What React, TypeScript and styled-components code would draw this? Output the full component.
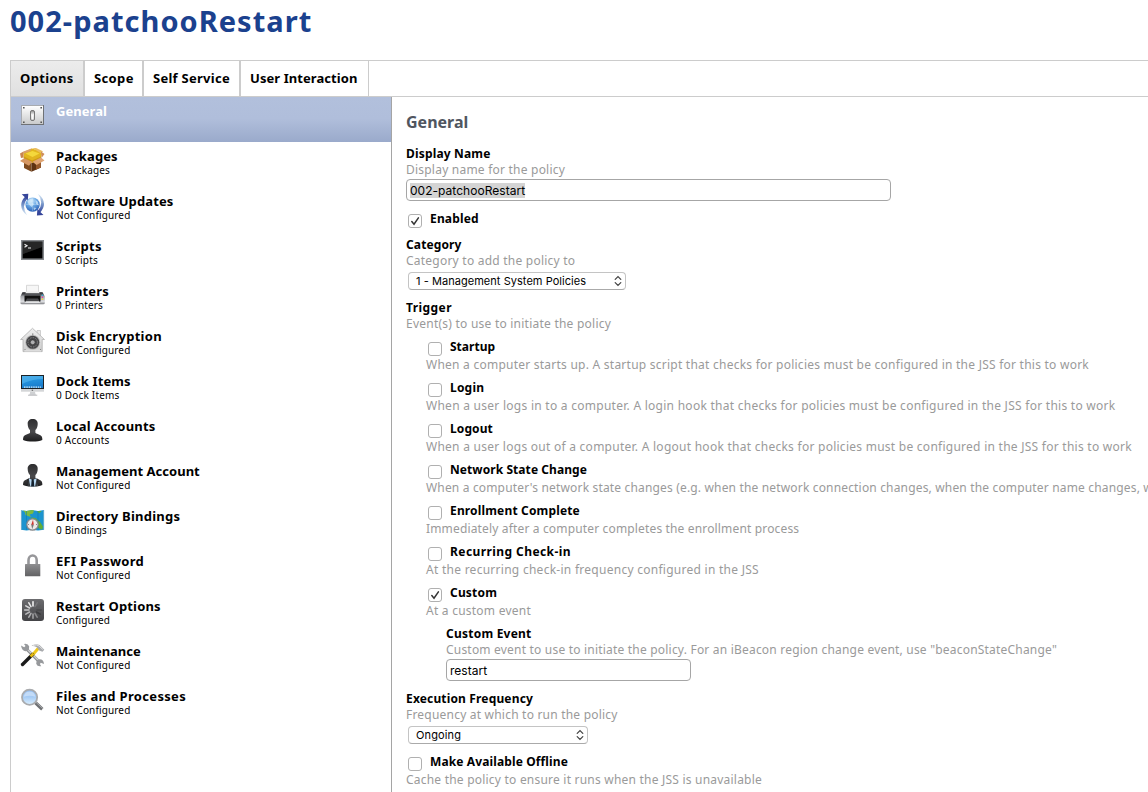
import React from "react";
import styled, { createGlobalStyle, css } from "styled-components";

const GlobalStyle = createGlobalStyle`
  *, *::before, *::after { box-sizing: border-box; }
  html, body { margin: 0; padding: 0; background: #fff; overflow: hidden; }
  body { font-family: "Noto Sans", "Open Sans", sans-serif; color: #000; }
`;

const Page = styled.div`
  display: flex;
  flex-direction: column;
  height: 792px;
  padding: 1px 0 0 10px;
  overflow: hidden;
  white-space: nowrap;
`;

const PageTitle = styled.h1`
  margin: 0 0 19px;
  font-size: 29px;
  line-height: 40px;
  font-weight: 700;
  letter-spacing: 1.03px;
  color: #1b418e;
`;

const TabBar = styled.nav`
  display: flex;
  flex: none;
  height: 37px;
  border-top: 1px solid #ccc;
  border-bottom: 1px solid #ccc;
`;

const Tab = styled.div<{ $width: number; $ls: number; $active?: boolean }>`
  flex: none;
  width: ${(p) => p.$width}px;
  padding: 8px 0 0 9px;
  border-left: 1px solid #ccc;
  border-right: 1px solid #ccc;
  font-size: 13px;
  line-height: 18px;
  font-weight: 700;
  letter-spacing: ${(p) => p.$ls}px;
  background: ${(p) => (p.$active ? "linear-gradient(#ececec, #e0e0e0)" : "#fff")};
`;

const Body = styled.div`
  display: flex;
  flex: 1;
  min-height: 0;
`;

const Sidebar = styled.aside`
  flex: none;
  width: 382px;
  border-left: 1px solid #ccc;
  border-right: 1px solid #a5a5a5;
`;

const SideItem = styled.div<{ $active?: boolean }>`
  display: flex;
  height: 45px;
  padding: 5px 0 0 9px;
  gap: 10px;
  ${(p) =>
    p.$active &&
    css`
      color: #fff;
      background: linear-gradient(#b2c0dc 0%, #b0bedb 48%, #9aaacb 100%);
    `}
`;

const SideText = styled.div`
  display: flex;
  flex-direction: column;
  padding-top: 1px;
`;

const SideTitle = styled.div<{ $ls: number }>`
  font-size: 13px;
  line-height: 16px;
  font-weight: 700;
  letter-spacing: ${(p) => p.$ls}px;
`;

const SideStatus = styled.div<{ $ls: number }>`
  font-size: 10px;
  line-height: 12px;
  letter-spacing: ${(p) => p.$ls}px;
`;

const IconSvg = styled.svg`
  display: block;
  flex: none;
  width: 26px;
  height: 26px;
`;

const Panel = styled.main`
  flex: 1;
  min-width: 0;
  padding: 14px 0 0 14px;
  overflow: hidden;
`;

const PanelHeading = styled.h2`
  margin: 0 0 13px;
  font-size: 16px;
  line-height: 22px;
  font-weight: 700;
  color: #50565f;
`;

const Field = styled.section<{ $gap: number; $indent?: number }>`
  margin: 0 0 ${(p) => p.$gap}px ${(p) => p.$indent || 0}px;
`;

const Label = styled.div<{ $ls: number }>`
  font-size: 12px;
  line-height: 16px;
  font-weight: 700;
  letter-spacing: ${(p) => p.$ls}px;
`;

const Help = styled.div<{ $ls: number }>`
  font-size: 12px;
  line-height: 16px;
  letter-spacing: ${(p) => p.$ls}px;
  color: #9a9a9a;
`;

const TextField = styled.div<{ $width: number }>`
  display: flex;
  align-items: center;
  width: ${(p) => p.$width}px;
  height: 22px;
  margin-top: 1px;
  padding-left: 3px;
  border: 1px solid #a6a6a6;
  border-radius: 4px;
  font: 12px/15px Inter, sans-serif;
  letter-spacing: 0.03px;
`;

const Selection = styled.span`
  height: 15px;
  background: #d4d4d4;
`;

const SelectBox = styled.div<{ $width: number; $ls: number }>`
  display: flex;
  align-items: center;
  justify-content: space-between;
  width: ${(p) => p.$width}px;
  height: 18px;
  margin: 3px 0 0 2px;
  padding: 0 3px 0 7px;
  border: 1px solid #c4c4c4;
  border-bottom-color: #aaa;
  border-radius: 4px;
  font: 11px/16px Inter, sans-serif;
  letter-spacing: ${(p) => p.$ls}px;
`;

const Arrows = styled.svg`
  width: 8px;
  height: 12px;
`;

const CheckRow = styled.div`
  display: flex;
  gap: 8px;
  height: 18px;
  padding-left: 2px;
`;

const CheckBox = styled.span`
  display: block;
  width: 14px;
  height: 14px;
  margin-top: 3px;
  border: 1px solid #b0b0b0;
  border-radius: 3px;
  background: #fff;
`;

const Tick = styled.svg`
  display: block;
  width: 12px;
  height: 12px;
`;

function Check({ text, ls, checked }: { text: string; ls: number; checked?: boolean }) {
  return (
    <CheckRow>
      <CheckBox>
        {checked && (
          <Tick viewBox="0 0 12 12">
            <path d="M2.8 6.6 5 9.2 9.4 2.8" fill="none" stroke="#333" strokeWidth="1.5" strokeLinecap="round" />
          </Tick>
        )}
      </CheckBox>
      <Label $ls={ls}>{text}</Label>
    </CheckRow>
  );
}

function Select({ text, width, ls }: { text: string; width: number; ls: number }) {
  return (
    <SelectBox $width={width} $ls={ls}>
      {text}
      <Arrows viewBox="0 0 8 12">
        <path d="M1.2 4.4 4 1.6 6.8 4.4M1.2 7.6 4 10.4 6.8 7.6" fill="none" stroke="#444" strokeWidth="1.25" strokeLinecap="round" />
      </Arrows>
    </SelectBox>
  );
}

const SwitchIcon = () => (
  <IconSvg viewBox="0 0 26 26">
    <defs>
      <linearGradient id="plate" x2="0" y2="1"><stop stopColor="#fff" /><stop offset="1" stopColor="#c9cacb" /></linearGradient>
      <linearGradient id="toggle" x2="0" y2="1"><stop stopColor="#888" /><stop offset="0.4" stopColor="#eee" /><stop offset="1" stopColor="#aaa" /></linearGradient>
    </defs>
    <rect x="1" y="3" width="23" height="20" fill="#6f7276" />
    <rect x="1" y="3" width="22" height="19" fill="#a8abb0" />
    <rect x="2" y="4" width="21" height="18" fill="url(#plate)" />
    <rect x="10.5" y="8.5" width="4" height="10" rx="1.5" fill="url(#toggle)" stroke="#777" />
    <path d="M11.5 13h2v4.5h-2z" fill="#fafafa" />
    <path d="M3 5h1.6v1.4H3zM20.4 5H22v1.4h-1.6zM3 19.5h1.6V21H3zM20.4 19.5H22V21h-1.6z" fill="#555" />
  </IconSvg>
);

const PackageIcon = () => (
  <IconSvg viewBox="0 0 26 26">
    <path d="M4 12 11.5 16v8.7L4 21z" fill="#7d4a1f" />
    <path d="M11.5 16 21 12v8.5l-9.5 4.2z" fill="#5e3212" />
    <path d="M16 15l5-2v7.5l-5 2.2z" fill="#96592b" />
    <path d="M3.5 5 12 1.500 22 4.500 21 11l-9 3.500L3.500 11z" fill="#e2b51f" />
    <path d="M5.500 6.500 12.500 4l7 2.500-7 3.500z" fill="#f4d83c" />
    <path d="M4 9.500l8 4 9-4v2.500l-9 4-8-4z" fill="#cf9a16" />
    <path d="M3.500 4.500 12 1.200l-2 3-6.500 2.600z" fill="#d9a06c" />
    <path d="M12.500 1.200 16 1l7 3.200-2 2z" fill="#e9bc62" />
    <path d="M0 6.500 3.500 4.500v6L1 11z" fill="#c98552" />
    <path d="M0 14 4 11.200l8 3.500-3 4z" fill="#d69763" />
    <path d="M12.500 14.700 21 10.500l3.500 3-8 4.500z" fill="#dfa574" />
    <path d="M21 4.500l3.500 2.500-3 4z" fill="#cf8d58" />
  </IconSvg>
);

const UpdatesIcon = () => (
  <IconSvg viewBox="0 0 26 26">
    <defs>
      <radialGradient id="globe" cx="0.42" cy="0.25" r="0.8"><stop stopColor="#d8edfc" /><stop offset="0.45" stopColor="#6aa8e4" /><stop offset="1" stopColor="#2257b0" /></radialGradient>
      <linearGradient id="arcL" x2="0" y2="1"><stop stopColor="#33459b" /><stop offset="0.5" stopColor="#7f9fce" /><stop offset="1" stopColor="#e3eff9" /></linearGradient>
      <linearGradient id="arcR" x2="0" y2="1"><stop stopColor="#e3eff9" /><stop offset="0.5" stopColor="#7f9fce" /><stop offset="1" stopColor="#33459b" /></linearGradient>
    </defs>
    <circle cx="12.600" cy="12.600" r="7.200" fill="url(#globe)" />
    <path d="M7.500 9l3.500-2.500 2 1-1.500 2.500L14 12l-2.500 3-3-3zM15.500 8l2.500 2 .5 3.500-2.500-1.500zM13.500 15.500l3 .5-2.500 2.500z" fill="#d4ebfa" opacity="0.7" />
    <path d="M5.500 12.500h14M12.600 5.500v14" fill="none" stroke="#e4f3ff" strokeWidth="0.500" opacity="0.600" />
    <path d="M5.300 4.500Q-1.200 11 2.600 18.500 4 21.300 7.300 23.500 .6 14 7.400 6.500z" fill="url(#arcL)" />
    <path d="M1.700 2.300 8.300 1.700 7.800 8.300 6 6.300z" fill="#35459a" />
    <path d="M19.900 20.700Q26.400 14.200 22.600 6.700 21.200 3.900 17.900 1.700 24.600 11.200 17.800 18.700z" fill="url(#arcR)" />
    <path d="M23.500 22.900 16.900 23.500 17.400 16.900 19.200 18.900z" fill="#35459a" />
  </IconSvg>
);

const ScriptsIcon = () => (
  <IconSvg viewBox="0 0 26 26">
    <rect x="1" y="3" width="23" height="20" fill="#85888c" />
    <rect x="2.500" y="4.500" width="20" height="17" fill="#151515" />
    <path d="M3 17 22 10v11H3z" fill="#000" />
    <path d="M22 5v5L3 17V5z" fill="#262626" />
    <path d="M4.500 7.300 7 8.700 4.500 10.200M8 11h3" fill="none" stroke="#f2f2f2" strokeWidth="1.100" />
  </IconSvg>
);

const PrinterIcon = () => (
  <IconSvg viewBox="0 0 26 26">
    <defs>
      <linearGradient id="prn" x2="0" y2="1"><stop stopColor="#5f5f63" /><stop offset="0.150" stopColor="#36373b" /><stop offset="0.350" stopColor="#a2a4a9" /><stop offset="0.800" stopColor="#dcdde0" /><stop offset="1" stopColor="#77787c" /></linearGradient>
    </defs>
    <path d="M6.500 3.300h12v8h-12z" fill="#f6f6f6" stroke="#c9c9c9" strokeWidth="0.700" />
    <path d="M2.500 10h20l2.300 4.500v6.500q0 1.200-1.500 1.200H2Q.4 22.200.4 21v-6.500z" fill="url(#prn)" />
    <path d="M6 9.500h13l.6 1.800H5.400z" fill="#ececec" />
    <path d="M4.500 13.500h16v6h-16z" fill="#101010" />
    <path d="M7 16.500h11l2 3.500H5z" fill="#4a4b4e" />
    <path d="M6 19.200h13l1 1.600H5z" fill="#f0f0f2" />
    <path d="M21.700 12.500h1.400v1.400h-1.400z" fill="#35b7e5" />
    <path d="M21.700 14.500h1.400v1.400h-1.400z" fill="#e8339c" />
    <path d="M21.700 16.500h1.400v1.400h-1.400z" fill="#f3d51e" />
  </IconSvg>
);

const VaultIcon = () => (
  <IconSvg viewBox="0 0 26 26">
    <defs>
      <linearGradient id="house" x2="0" y2="1"><stop stopColor="#f0f0f0" /><stop offset="1" stopColor="#cbcbcb" /></linearGradient>
    </defs>
    <path d="M17 3.500h3.500V9H17z" fill="#e8e8e8" stroke="#bdbdbd" strokeWidth="0.700" />
    <path d="M12.500 1.300 24.500 12.500H22.200V24.600H3V12.500H.6z" fill="url(#house)" stroke="#b0b0b0" strokeWidth="0.800" />
    <path d="M4.500 22.500h16.500v2H4.500z" fill="#ddd" />
    <circle cx="12.700" cy="15.300" r="7.400" fill="#b0b0b0" />
    <circle cx="12.700" cy="15.300" r="6.500" fill="#454547" />
    <circle cx="12.700" cy="15.300" r="4.700" fill="none" stroke="#858587" strokeWidth="1" strokeDasharray="1.500 1.200" />
    <circle cx="12.700" cy="15.300" r="2.400" fill="#b0b0b2" stroke="#333" strokeWidth="0.600" />
    <path d="M12 6.500h1.400v1.200H12zM4.500 22h1v1h-1zM20 22h1v1h-1z" fill="#888" />
  </IconSvg>
);

const DisplayIcon = () => (
  <IconSvg viewBox="0 0 26 26">
    <defs>
      <linearGradient id="screen" x2="0.300" y2="1"><stop stopColor="#3ba3e4" /><stop offset="0.500" stopColor="#2391dc" /><stop offset="1" stopColor="#1a7dcc" /></linearGradient>
    </defs>
    <rect x="1" y="3" width="23" height="14" fill="#1d2226" />
    <rect x="2" y="4" width="21" height="12" fill="url(#screen)" />
    <path d="M2 4h21v3Q12 7 2 12z" fill="#58b7ee" opacity="0.600" />
    <path d="M4 15.200h17" stroke="#d6edfa" strokeWidth="1.200" strokeDasharray="1.500 0.800" />
    <rect x="1" y="17" width="23" height="2.700" fill="#d4d6d8" />
    <rect x="11.700" y="17.600" width="1.400" height="1.400" fill="#777" />
    <path d="M10.200 19.700h4.800l.5 2.600 1.700 1.200H8l1.700-1.200z" fill="#cfd1d3" />
    <path d="M8 23.200h9.300" stroke="#b6b8ba" strokeWidth="0.800" />
  </IconSvg>
);

const PersonShape = () => (
  <>
    <defs>
      <linearGradient id="person" x2="0" y2="1"><stop stopColor="#2d2d2f" /><stop offset="0.550" stopColor="#4a4a4c" /><stop offset="1" stopColor="#1c1c1d" /></linearGradient>
    </defs>
    <path
      d="M12.700 2C9.300 2 7.400 4 7.700 7.200c.1 2.300.8 4.500 2.300 5.800v2.800c0 1-5.500 1.600-6.500 4-.4 1.200-.5 2.500-.4 3.200C5.500 24.300 9 24.500 12.700 24.500S19.900 24.300 22.300 23c.1-.7 0-2-.4-3.200-1-2.400-6.500-3-6.500-4V13c1.500-1.300 2.200-3.500 2.300-5.800C18 4 16.100 2 12.700 2z"
      fill="url(#person)"
    />
  </>
);

const PersonIcon = () => (
  <IconSvg viewBox="0 0 26 26">
    <PersonShape />
  </IconSvg>
);

const ManagerIcon = () => (
  <IconSvg viewBox="0 0 26 26">
    <PersonShape />
    <path d="M8.700 16.300 12.700 18l4-1.700.8 7.800q-4.800.7-9.600 0z" fill="#b4d6f0" />
    <path d="M11.700 17.300h2l.6 7.100h-3.200z" fill="#14202c" />
    <path d="M8.700 16.300 6.800 17.500 8 24.200h2.300zM16.700 16.300l1.900 1.200-1.200 6.700h-2.300z" fill="#29292b" opacity="0.900" />
  </IconSvg>
);

const MapIcon = () => (
  <IconSvg viewBox="0 0 26 26">
    <path d="M1 3.300 6.500 4 12 3l6 1 6-.9v19.600l-6 .8-6-.8-5.500.8-5.500-.8z" fill="#1b94cf" />
    <path d="M3 3.600 6.500 4 12 3l2 .5-1 3-3.500 1L11 10 8 9 5.500 8 5 5.500z" fill="#7dbb3f" />
    <path d="M11 10.500l4.500.5L20 15l3 4.500-1 3.300-6-3zM17 4h4.500L19 6.500z" fill="#62ad35" />
    <path d="M6.500 4v19M18 4v19" stroke="#0c76ac" strokeWidth="0.500" />
    <path d="M1.400 3.300v19.400M23.700 3.200v19.500" stroke="#87b6cb" strokeWidth="0.800" />
    <circle cx="12.500" cy="17.500" r="5.700" fill="#eceae8" stroke="#85878a" strokeWidth="1.200" />
    <path d="M11.200 18 13 12.700l.8 5z" fill="#d3302a" />
    <path d="M11.200 17.600 12.200 22.300l1.600-4.600z" fill="#777" />
    <path d="M8 17.500h1M16 17.500h1" stroke="#888" />
  </IconSvg>
);

const LockIcon = () => (
  <IconSvg viewBox="0 0 26 26">
    <defs>
      <linearGradient id="lock" x2="0" y2="1"><stop stopColor="#8f8f91" /><stop offset="1" stopColor="#626264" /></linearGradient>
    </defs>
    <path d="M8.500 13V8.200a4.100 4.700 0 0 1 8.200 0V13" fill="none" stroke="#97979a" strokeWidth="2.600" />
    <rect x="5" y="12" width="15.300" height="12.200" rx="0.500" fill="url(#lock)" />
  </IconSvg>
);

const SPOKES = ["#f2f2f2", "#77777a", "#5c5c5e", "#48484a", "#3c3c3e", "#8a8a8c", "#a0a0a2", "#adadaf", "#b8b8ba", "#c6c6c7", "#d4d4d5", "#e6e6e7"];

const RestartIcon = () => (
  <IconSvg viewBox="0 0 26 26">
    <defs>
      <linearGradient id="tile" x2="0" y2="1"><stop stopColor="#6c6c6f" /><stop offset="1" stopColor="#434346" /></linearGradient>
    </defs>
    <rect x="2" y="2" width="22" height="22" rx="3" fill="url(#tile)" />
    {SPOKES.map((color, i) => (
      <path key={i} d="M13 9V4.700" stroke={color} strokeWidth="1.600" strokeLinecap="round" transform={`rotate(${i * 30} 13 13)`} />
    ))}
  </IconSvg>
);

const ToolsIcon = () => (
  <IconSvg viewBox="0 0 26 26">
    <path d="M6 6.500 20 20.500" stroke="#8d8f92" strokeWidth="3" />
    <path d="M6 6 20 20" stroke="#cfd1d3" strokeWidth="1.200" />
    <path d="M1 3.500l3.200 1.800L5.500 4 4 2q4-.8 5.200 2.500L8.800 8 6 9.200Q2 9.500 1 3.500z" fill="#97999c" />
    <path d="M24 22l-3.200-1.200-.9 1.300 1.300 2.100q-4 .6-5-2.500l.5-3.400 3-1.100q4 0 4.300 4.800z" fill="#97999c" />
    <path d="M13 12.500 18.500 6" stroke="#f0c81c" strokeWidth="3" />
    <path d="M2.500 22.500 12.500 12.500" stroke="#1b1b1b" strokeWidth="3.400" strokeLinecap="round" />
    <path d="M10.500 14.500 13.500 11.500" stroke="#e3b910" strokeWidth="2.800" />
    <path d="M11.500 3.700Q15.500 1 19.500 3l4.800 4.800-1.900 1.900-3.200-1.200-2.400-3.300q-2-1.200-5.300-1.500z" fill="#a8aaad" />
    <path d="M13 3.500q3.500-1.400 6 .4l3.800 3.600" fill="none" stroke="#e6e6e7" strokeWidth="0.900" />
  </IconSvg>
);

const SearchIcon = () => (
  <IconSvg viewBox="0 0 26 26">
    <defs>
      <linearGradient id="lens" x2="0" y2="1"><stop stopColor="#8db9ee" /><stop offset="0.500" stopColor="#a8cdf5" /><stop offset="1" stopColor="#dcf0ff" /></linearGradient>
    </defs>
    <path d="M15.500 15.800 22.300 22.300" stroke="#6e7073" strokeWidth="3.400" />
    <path d="M16 15.300 23 21.800" stroke="#a9abad" strokeWidth="1" />
    <circle cx="9.600" cy="10.300" r="7.600" fill="url(#lens)" stroke="#a9abae" strokeWidth="1.800" />
    <path d="M3.800 9.800Q4.600 4.600 9.600 4.500t5.800 5.300Q9.600 7.800 3.800 9.800z" fill="#d3e6fb" opacity="0.700" />
  </IconSvg>
);

const TABS = [
  { text: "Options", width: 74, ls: 0.36, active: true },
  { text: "Scope", width: 59, ls: 0.36 },
  { text: "Self Service", width: 97, ls: 0.27 },
  { text: "User Interaction", width: 129, ls: 0.07 },
];

const ITEMS = [
  { icon: SwitchIcon, text: "General", ls: 0.06, active: true },
  { icon: PackageIcon, text: "Packages", ls: 0.1, status: "0 Packages", sls: 0.17 },
  { icon: UpdatesIcon, text: "Software Updates", ls: 0.12, status: "Not Configured", sls: 0.14 },
  { icon: ScriptsIcon, text: "Scripts", ls: 0.25, status: "0 Scripts", sls: 0.24 },
  { icon: PrinterIcon, text: "Printers", ls: 0.1, status: "0 Printers", sls: 0.16 },
  { icon: VaultIcon, text: "Disk Encryption", ls: 0.31, status: "Not Configured", sls: 0.14 },
  { icon: DisplayIcon, text: "Dock Items", ls: 0.13, status: "0 Dock Items", sls: 0.2 },
  { icon: PersonIcon, text: "Local Accounts", ls: 0.2, status: "0 Accounts", sls: 0.25 },
  { icon: ManagerIcon, text: "Management Account", ls: 0.03, status: "Not Configured", sls: 0.14 },
  { icon: MapIcon, text: "Directory Bindings", ls: 0.23, status: "0 Bindings", sls: 0.16 },
  { icon: LockIcon, text: "EFI Password", ls: 0.27, status: "Not Configured", sls: 0.14 },
  { icon: RestartIcon, text: "Restart Options", ls: 0.17, status: "Configured", sls: 0.14 },
  { icon: ToolsIcon, text: "Maintenance", ls: -0.02, status: "Not Configured", sls: 0.14 },
  { icon: SearchIcon, text: "Files and Processes", ls: 0.32, status: "Not Configured", sls: 0.14 },
];

const TRIGGERS = [
  { text: "Startup", ls: 0.01, help: "When a computer starts up. A startup script that checks for policies must be configured in the JSS for this to work", hls: 0.241 },
  { text: "Login", ls: 0.2, help: "When a user logs in to a computer. A login hook that checks for policies must be configured in the JSS for this to work", hls: 0.267 },
  { text: "Logout", ls: 0.1, help: "When a user logs out of a computer. A logout hook that checks for policies must be configured in the JSS for this to work", hls: 0.26 },
  { text: "Network State Change", ls: 0.07, help: "When a computer's network state changes (e.g. when the network connection changes, when the computer name changes, when the IP address changes)", hls: 0.165 },
  { text: "Enrollment Complete", ls: 0.16, help: "Immediately after a computer completes the enrollment process", hls: 0.156 },
  { text: "Recurring Check-in", ls: 0.42, help: "At the recurring check-in frequency configured in the JSS", hls: 0.268 },
  { text: "Custom", ls: 0.18, help: "At a custom event", hls: 0.237, checked: true },
];

export default function App() {
  return (
    <>
      <GlobalStyle />
      <Page>
        <PageTitle>002-patchooRestart</PageTitle>
        <TabBar>
          {TABS.map((t) => (
            <Tab key={t.text} $width={t.width} $ls={t.ls} $active={t.active}>
              {t.text}
            </Tab>
          ))}
        </TabBar>
        <Body>
          <Sidebar>
            {ITEMS.map(({ icon: Icon, ...item }) => (
              <SideItem key={item.text} $active={item.active}>
                <Icon />
                <SideText>
                  <SideTitle $ls={item.ls}>{item.text}</SideTitle>
                  {item.status && <SideStatus $ls={item.sls || 0}>{item.status}</SideStatus>}
                </SideText>
              </SideItem>
            ))}
          </Sidebar>
          <Panel>
            <PanelHeading>General</PanelHeading>
            <Field $gap={10}>
              <Label $ls={0.17}>Display Name</Label>
              <Help $ls={0.22}>Display name for the policy</Help>
              <TextField $width={485}>
                <Selection>002-patchooRestart</Selection>
              </TextField>
            </Field>
            <Field $gap={8}>
              <Check text="Enabled" ls={0.16} checked />
            </Field>
            <Field $gap={10}>
              <Label $ls={0.12}>Category</Label>
              <Help $ls={0.23}>Category to add the policy to</Help>
              <Select text="1 - Management System Policies" width={218} ls={0.05} />
            </Field>
            <Field $gap={7}>
              <Label $ls={0.43}>Trigger</Label>
              <Help $ls={0.235}>Event(s) to use to initiate the policy</Help>
            </Field>
            {TRIGGERS.map((t) => (
              <Field key={t.text} $gap={7} $indent={20}>
                <Check text={t.text} ls={t.ls} checked={t.checked} />
                <Help $ls={t.hls}>{t.help}</Help>
              </Field>
            ))}
            <Field $gap={10} $indent={40}>
              <Label $ls={0.23}>Custom Event</Label>
              <Help $ls={0.201}>Custom event to use to initiate the policy. For an iBeacon region change event, use "beaconStateChange"</Help>
              <TextField $width={245}>restart</TextField>
            </Field>
            <Field $gap={10}>
              <Label $ls={0.155}>Execution Frequency</Label>
              <Help $ls={0.21}>Frequency at which to run the policy</Help>
              <Select text="Ongoing" width={180} ls={0.12} />
            </Field>
            <Field $gap={0}>
              <Check text="Make Available Offline" ls={0.12} />
              <Help $ls={0.216}>Cache the policy to ensure it runs when the JSS is unavailable</Help>
            </Field>
          </Panel>
        </Body>
      </Page>
    </>
  );
}
